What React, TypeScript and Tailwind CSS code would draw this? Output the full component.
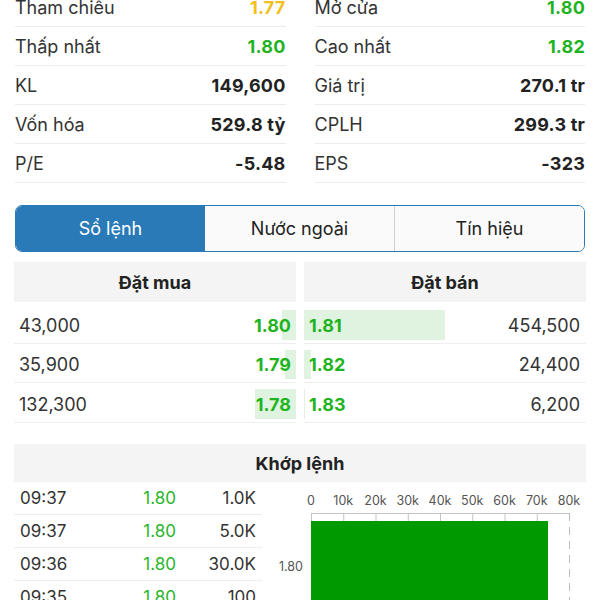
import React from 'react';

type Stat = { label: string; value: string; tone?: 'up' | 'ref' };

const leftStats: Stat[] = [
  { label: 'Tham chiếu', value: '1.77', tone: 'ref' },
  { label: 'Thấp nhất', value: '1.80', tone: 'up' },
  { label: 'KL', value: '149,600' },
  { label: 'Vốn hóa', value: '529.8 tỷ' },
  { label: 'P/E', value: '-5.48' },
];

const rightStats: Stat[] = [
  { label: 'Mở cửa', value: '1.80', tone: 'up' },
  { label: 'Cao nhất', value: '1.82', tone: 'up' },
  { label: 'Giá trị', value: '270.1 tr' },
  { label: 'CPLH', value: '299.3 tr' },
  { label: 'EPS', value: '-323' },
];

const buys = [
  { vol: '43,000', price: '1.80', bar: 14 },
  { vol: '35,900', price: '1.79', bar: 11 },
  { vol: '132,300', price: '1.78', bar: 41 },
];

const sells = [
  { vol: '454,500', price: '1.81', bar: 141 },
  { vol: '24,400', price: '1.82', bar: 7 },
  { vol: '6,200', price: '1.83', bar: 1 },
];

const matches = [
  { time: '09:37', price: '1.80', vol: '1.0K' },
  { time: '09:37', price: '1.80', vol: '5.0K' },
  { time: '09:36', price: '1.80', vol: '30.0K' },
  { time: '09:35', price: '1.80', vol: '100' },
];

const toneClass = (tone?: Stat['tone']) =>
  tone === 'up' ? 'text-[#1fb41f]' : tone === 'ref' ? 'text-[#f2bf1d]' : 'text-[#222]';

const StatColumn: React.FC<{ items: Stat[] }> = ({ items }) => (
  <div className="flex-1">
    {items.map((s) => (
      <div key={s.label} className="flex h-[39px] items-center justify-between border-b border-[#ececec] pt-[1px]">
        <span className="text-[18px] text-[#333]">{s.label}</span>
        <span className={`text-[18px] font-bold tracking-[0.2px] ${toneClass(s.tone)}`}>{s.value}</span>
      </div>
    ))}
  </div>
);

const ticks = ['0', '10k', '20k', '30k', '40k', '50k', '60k', '70k', '80k'];

const MatchChart = () => (
  <svg width="324" height="125" className="block">
    {ticks.map((t, i) => (
      <text
        key={t}
        x={49 + i * 32.25}
        y={23}
        textAnchor="middle"
        fontSize="12.5"
        fill="#555"
        fontFamily="Inter, sans-serif"
      >
        {t}
      </text>
    ))}
    <line x1={49} y1={31.5} x2={307} y2={31.5} stroke="#c4c4c4" />
    {ticks.slice(0, 8).map((t, i) => (
      <line key={t} x1={49.5 + i * 32.25} y1={31} x2={49.5 + i * 32.25} y2={39} stroke="#c4c4c4" />
    ))}
    <line x1={307.5} y1={31} x2={307.5} y2={125} stroke="#bdbdbd" strokeDasharray="8 6" />
    <rect x={49} y={39} width={237} height={90} fill="#009a00" />
    <text x={41} y={89} textAnchor="end" fontSize="12.5" fill="#555" fontFamily="Inter, sans-serif">
      1.80
    </text>
  </svg>
);

export default function App() {
  return (
    <div className="h-[600px] w-[600px] overflow-hidden bg-white font-['Inter',sans-serif] text-[#222]">
      <div className="-mt-[12px] flex gap-[29px] px-[15px]">
        <StatColumn items={leftStats} />
        <StatColumn items={rightStats} />
      </div>

      <div className="mx-[15px] mt-[22px] flex h-[47px] overflow-hidden rounded-[7px] border border-[#2a7ab8] text-[18px]">
        <div className="flex flex-1 items-center justify-center bg-[#2a7ab8] text-white">Sổ lệnh</div>
        <div className="flex flex-1 items-center justify-center bg-[#fafafa] text-[#222]">Nước ngoài</div>
        <div className="flex flex-1 items-center justify-center border-l border-[#cfcfcf] bg-[#fafafa] text-[#222]">
          Tín hiệu
        </div>
      </div>

      <div className="mt-[10px] flex gap-[8px] px-[14px]">
        <div className="flex-1">
          <div className="flex h-[40px] items-center justify-center bg-[#f4f4f4] text-[18px] font-bold">Đặt mua</div>
          <div className="mt-[2px]">
            {buys.map((b) => (
              <div key={b.price} className="relative flex h-[39.5px] items-center justify-between border-b border-[#eeeeee] pt-[4px]">
                <div className="absolute bottom-[3px] right-0 top-[6px] bg-[#e0f3e0]" style={{ width: b.bar }} />
                <span className="relative pl-[5px] text-[18px] text-[#333]">{b.vol}</span>
                <span className="relative pr-[5px] text-[18px] font-bold text-[#1fb41f]">{b.price}</span>
              </div>
            ))}
          </div>
        </div>
        <div className="flex-1">
          <div className="flex h-[40px] items-center justify-center bg-[#f4f4f4] text-[18px] font-bold">Đặt bán</div>
          <div className="mt-[2px]">
            {sells.map((s) => (
              <div key={s.price} className="relative flex h-[39.5px] items-center justify-between border-b border-[#eeeeee] pt-[4px]">
                <div className="absolute bottom-[3px] left-0 top-[6px] bg-[#e0f3e0]" style={{ width: s.bar }} />
                <span className="relative pl-[5px] text-[18px] font-bold text-[#1fb41f]">{s.price}</span>
                <span className="relative pr-[6px] text-[18px] text-[#333]">{s.vol}</span>
              </div>
            ))}
          </div>
        </div>
      </div>

      <div className="mx-[14px] mt-[21px] flex h-[38px] items-center justify-center bg-[#f4f4f4] pt-[2px] text-[18px] font-bold">
        Khớp lệnh
      </div>
      <div className="flex pl-[14px]">
        <div className="w-[248px]">
          {matches.map((m, i) => (
            <div key={i} className="flex h-[33px] items-center border-b border-[#eeeeee] pt-[3px] text-[17px]">
              <span className="w-[110px] pl-[6px] text-[#333]">{m.time}</span>
              <span className="w-[52px] text-right text-[#2ab52a]">{m.price}</span>
              <span className="flex-1 pr-[6px] text-right text-[#333]">{m.vol}</span>
            </div>
          ))}
        </div>
        <MatchChart />
      </div>
    </div>
  );
}
